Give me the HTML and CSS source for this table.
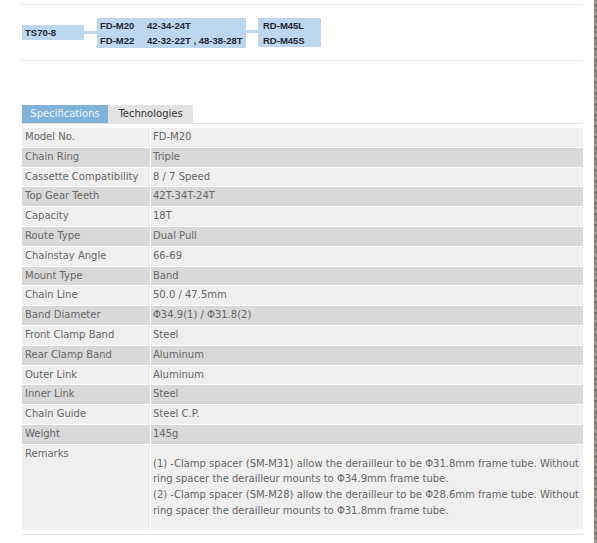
FILE: index.html
```html
<!DOCTYPE html>
<html>
<head>
<meta charset="utf-8">
<link rel="stylesheet" href="styles.css">
</head>
<body>
<div class="shell">
  <div class="page">
    <div class="chain">
      <div class="box box-ts"><span>TS70-8</span></div>
      <div class="link"></div>
      <div class="box box-fd">
        <div class="fd-line"><span class="fd-name">FD-M20</span><span>42-34-24T</span></div>
        <div class="fd-line"><span class="fd-name">FD-M22</span><span>42-32-22T , 48-38-28T</span></div>
      </div>
      <div class="link link-rd"></div>
      <div class="box box-rd">
        <div class="fd-line">RD-M45L</div>
        <div class="fd-line">RD-M45S</div>
      </div>
    </div>

    <div class="tabs">
      <div class="tab tab-active">Specifications</div>
      <div class="tab">Technologies</div>
    </div>

    <div class="specs">
      <div class="row light"><div class="k">Model No.</div><div class="v">FD-M20</div></div>
      <div class="row dark"><div class="k">Chain Ring</div><div class="v">Triple</div></div>
      <div class="row light"><div class="k">Cassette Compatibility</div><div class="v">8 / 7 Speed</div></div>
      <div class="row dark"><div class="k">Top Gear Teeth</div><div class="v">42T-34T-24T</div></div>
      <div class="row light"><div class="k">Capacity</div><div class="v">18T</div></div>
      <div class="row dark"><div class="k">Route Type</div><div class="v">Dual Pull</div></div>
      <div class="row light"><div class="k">Chainstay Angle</div><div class="v">66-69</div></div>
      <div class="row dark"><div class="k">Mount Type</div><div class="v">Band</div></div>
      <div class="row light"><div class="k">Chain Line</div><div class="v">50.0 / 47.5mm</div></div>
      <div class="row dark"><div class="k">Band Diameter</div><div class="v">Φ34.9(1) / Φ31.8(2)</div></div>
      <div class="row light"><div class="k">Front Clamp Band</div><div class="v">Steel</div></div>
      <div class="row dark"><div class="k">Rear Clamp Band</div><div class="v">Aluminum</div></div>
      <div class="row light"><div class="k">Outer Link</div><div class="v">Aluminum</div></div>
      <div class="row dark"><div class="k">Inner Link</div><div class="v">Steel</div></div>
      <div class="row light"><div class="k">Chain Guide</div><div class="v">Steel C.P.</div></div>
      <div class="row dark"><div class="k">Weight</div><div class="v">145g</div></div>
      <div class="row light remarks"><div class="k">Remarks</div><div class="v">(1) -Clamp spacer (SM-M31) allow the derailleur to be Φ31.8mm frame tube. Without<br>ring spacer the derailleur mounts to Φ34.9mm frame tube.<br>(2) -Clamp spacer (SM-M28) allow the derailleur to be Φ28.6mm frame tube. Without<br>ring spacer the derailleur mounts to Φ31.8mm frame tube.</div></div>
    </div>
    <div class="endline"></div>
  </div>
  <div class="edge"></div>
</div>
</body>
</html>
```

FILE: styles.css
```css
html, body {
  margin: 0;
  padding: 0;
  background: #ffffff;
}
.shell {
  display: flex;
  width: 597px;
  height: 543px;
  overflow: hidden;
}
.page {
  width: 561px;
  padding: 4px 11px 0 22px;
  font-family: "DejaVu Sans", Verdana, sans-serif;
  font-size: 10px;
  color: #666666;
}
.edge {
  width: 3px;
  height: 543px;
  margin-left: 0;
  background: repeating-linear-gradient(180deg, #8d8a80 0px, #a6a398 3px, #6f6c64 5px, #9a978d 8px, #7b786f 11px);
}
.chain {
  height: 55px;
  border-top: 1px solid #e8e8e8;
  border-bottom: 1px solid #e8e8e8;
  display: flex;
  align-items: center;
  font-family: "Liberation Sans", Arial, sans-serif;
  font-weight: bold;
  font-size: 9.5px;
  color: #1c2633;
}
.box {
  background: #bed6ee;
}
.box-ts {
  width: 62px;
  height: 15px;
  line-height: 15px;
  padding-left: 3px;
  box-sizing: border-box;
}
.link {
  width: 13px;
  height: 3px;
  background: #bed6ee;
}
.link-rd {
  width: 12px;
  margin-top: -2px;
}
.box-fd {
  width: 149px;
  height: 30px;
  padding-left: 3px;
  box-sizing: border-box;
}
.box-rd {
  width: 63px;
  height: 29px;
  padding-left: 5px;
  padding-top: 1px;
  box-sizing: border-box;
}
.fd-line {
  height: 15px;
  line-height: 15px;
  display: flex;
  white-space: nowrap;
}
.box-rd .fd-line {
  height: 14.5px;
  line-height: 14.5px;
}
.fd-name {
  width: 47px;
}
.tabs {
  margin-top: 44px;
  display: flex;
  height: 18px;
  border-bottom: 1px solid #e2e2e2;
}
.tab {
  height: 18px;
  line-height: 18px;
  background: #e3e3e3;
  color: #333;
  width: 85px;
  text-align: center;
}
.tab-active {
  width: 86px;
  background: #80b2da;
  color: #eef5fb;
}
.specs {
  margin-top: 4px;
}
.row {
  display: grid;
  grid-template-columns: 129px 1fr;
  height: 18.8px;
  line-height: 18.8px;
  border-bottom: 1px solid #ffffff;
}
.light { background: #efefef; }
.dark { background: #d9d9d9; }
.k {
  padding-left: 3px;
  border-right: 1px solid #ffffff;
  white-space: nowrap;
}
.v {
  padding-left: 2px;
  white-space: nowrap;
}
.remarks {
  height: 84px;
  border-bottom: none;
}
.remarks .v {
  padding-top: 11px;
  line-height: 15.6px;
}
.endline {
  margin-top: 5px;
  border-top: 1px solid #e3e3e3;
}
```
